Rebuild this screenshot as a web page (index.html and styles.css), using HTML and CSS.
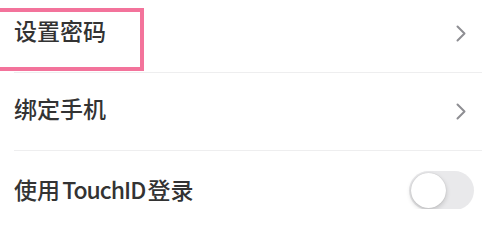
FILE: index.html
```html
<!DOCTYPE html>
<html lang="zh-CN">
<head>
<meta charset="utf-8">
<link rel="stylesheet" href="styles.css">
</head>
<body>
<div class="list">
  <div class="row">
    <span class="label">设置密码</span>
    <svg class="chev" width="10" height="17" viewBox="0 0 10 17"><polyline points="1.5,1.5 8.5,8.5 1.5,15.5" fill="none" stroke="#8e8e93" stroke-width="2" stroke-linecap="round" stroke-linejoin="round"/></svg>
  </div>
  <div class="row">
    <span class="label">绑定手机</span>
    <svg class="chev" width="10" height="17" viewBox="0 0 10 17"><polyline points="1.5,1.5 8.5,8.5 1.5,15.5" fill="none" stroke="#8e8e93" stroke-width="2" stroke-linecap="round" stroke-linejoin="round"/></svg>
  </div>
  <div class="row row-toggle">
    <span class="label label-last">使用 <span class="latin">TouchID</span> 登录</span>
    <span class="toggle"><span class="knob"></span></span>
  </div>
  <div class="highlight"></div>
</div>
</body>
</html>
```
FILE: styles.css
```css
html, body {
  margin: 0;
  padding: 0;
  background: #ffffff;
  overflow: hidden;
}
body {
  width: 482px;
  height: 209px;
  font-family: "Noto Sans CJK SC", "Noto Sans", sans-serif;
  color: #333333;
}
.list {
  position: relative;
  margin-top: -5px;
}
.row {
  display: flex;
  align-items: center;
  justify-content: space-between;
  height: 78px;
  box-sizing: border-box;
  margin-left: 14px;
  padding-right: 16px;
  border-bottom: 1px solid #eeeeef;
}
.row-toggle {
  padding-right: 8px;
  border-bottom: none;
}
.label {
  font-size: 23px;
  font-weight: 500;
  line-height: 1;
  margin-bottom: 6px;
}
.label-last {
  margin-bottom: 2px;
  word-spacing: -3px;
}
.latin {
  letter-spacing: -1px;
}
.chev {
  display: block;
}
.toggle {
  position: relative;
  display: block;
  width: 65px;
  height: 39px;
  border-radius: 20px;
  background: #e9e9eb;
}
.knob {
  position: absolute;
  left: 2px;
  top: 2px;
  width: 35px;
  height: 35px;
  border-radius: 50%;
  background: #ffffff;
  box-shadow: 0 2px 5px rgba(0,0,0,0.18), 0 0 1px rgba(0,0,0,0.2);
}
.highlight {
  position: absolute;
  left: -6px;
  top: 13px;
  width: 150px;
  height: 63px;
  box-sizing: border-box;
  border: 4px solid #f3739b;
}
```
